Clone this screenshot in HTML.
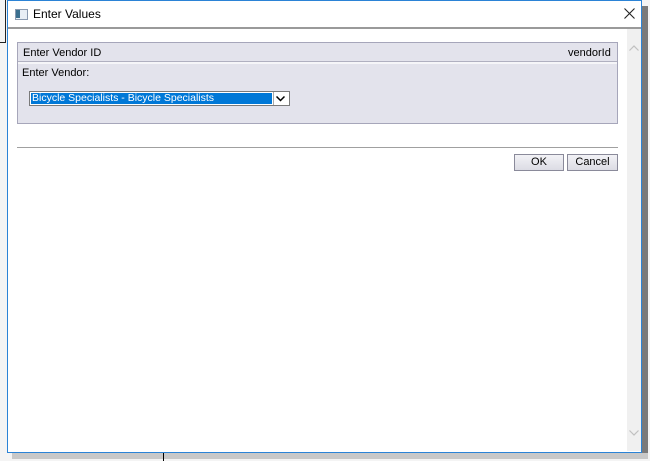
<!DOCTYPE html>
<html><head><style>
body{margin:0;width:650px;height:461px;background:#fff;position:relative;overflow:hidden;font-family:"Liberation Sans",Arial,sans-serif;font-size:11px;color:#000}
.abs{position:absolute}
</style></head><body>
<div class="abs" style="left:0;top:0;width:650px;height:461px;background:#f4f4f4"></div>
<div class="abs" style="left:5px;top:0;width:1px;height:43px;background:#222"></div>
<div class="abs" style="left:0;top:42px;width:6px;height:1px;background:#222"></div>
<div class="abs" style="left:642px;top:6px;width:6px;height:452px;background:#7a7a7a"></div>
<div class="abs" style="left:12px;top:453px;width:636px;height:6px;background:#c8c8c8"></div>
<div class="abs" style="left:163px;top:453px;width:1px;height:8px;background:#000"></div>
<div class="abs" style="left:7px;top:0;width:633px;height:451px;border:1px solid #2b83d6;background:#fff"></div>
<div class="abs" style="left:8px;top:27px;width:633px;height:2px;background:#9a9a9a"></div>
<div class="abs" style="left:15px;top:9px;width:11px;height:9px;border:1px solid #8a9ab0;background:#e8eef5"></div>
<div class="abs" style="left:16px;top:10px;width:4px;height:8px;background:#3a6f8f"></div>
<div class="abs" style="left:33px;top:7px;font-size:12px">Enter Values</div>
<svg class="abs" style="left:624px;top:8px" width="11" height="11"><path d="M0.5 0.5L10.5 10.5M10.5 0.5L0.5 10.5" stroke="#222" stroke-width="1.1"/></svg>
<div class="abs" style="left:627px;top:29px;width:14px;height:422px;background:#f0f0f0"></div>
<svg class="abs" style="left:629px;top:45px" width="10" height="6"><path d="M0.5 5.5L5 1L9.5 5.5" stroke="#c0c0c0" fill="none" stroke-width="1.2"/></svg>
<svg class="abs" style="left:629px;top:430px" width="10" height="6"><path d="M0.5 0.5L5 5L9.5 0.5" stroke="#c0c0c0" fill="none" stroke-width="1.2"/></svg>
<div class="abs" style="left:17px;top:42px;width:599px;height:80px;border:1px solid #a6a6ba;background:#e3e3ec"></div>
<div class="abs" style="left:18px;top:61px;width:599px;height:2px;background:#f5f5f8;border-top:1px solid #b0b0c0"></div>
<div class="abs" style="left:23px;top:47px">Enter Vendor ID</div>
<div class="abs" style="left:568px;top:47px">vendorId</div>
<div class="abs" style="left:22px;top:67px">Enter Vendor:</div>
<div class="abs" style="left:29px;top:91px;width:259px;height:13px;border:1px solid #7a7a7a;background:#fff"></div>
<div class="abs" style="left:31px;top:93px;width:240px;height:11px;background:#0078d7;color:#fff;font-size:10.5px;line-height:11px;padding-left:1px">Bicycle Specialists - Bicycle Specialists</div>
<div class="abs" style="left:273px;top:92px;width:15px;height:13px;border-left:1px solid #aaa;background:#fff"></div>
<svg class="abs" style="left:276px;top:96px" width="9" height="6"><path d="M0.5 0.5L4.5 4.5L8.5 0.5" stroke="#000" fill="none" stroke-width="1.5"/></svg>
<div class="abs" style="left:17px;top:147px;width:601px;height:1px;background:#a0a0a0"></div>
<div class="abs" style="left:514px;top:154px;width:48px;height:15px;border:1px solid #8a8a9a;background:linear-gradient(#f2f2f6,#dcdce4);text-align:center;line-height:15px">OK</div>
<div class="abs" style="left:567px;top:154px;width:49px;height:15px;border:1px solid #8a8a9a;background:linear-gradient(#f2f2f6,#dcdce4);text-align:center;line-height:15px">Cancel</div>
</body></html>
